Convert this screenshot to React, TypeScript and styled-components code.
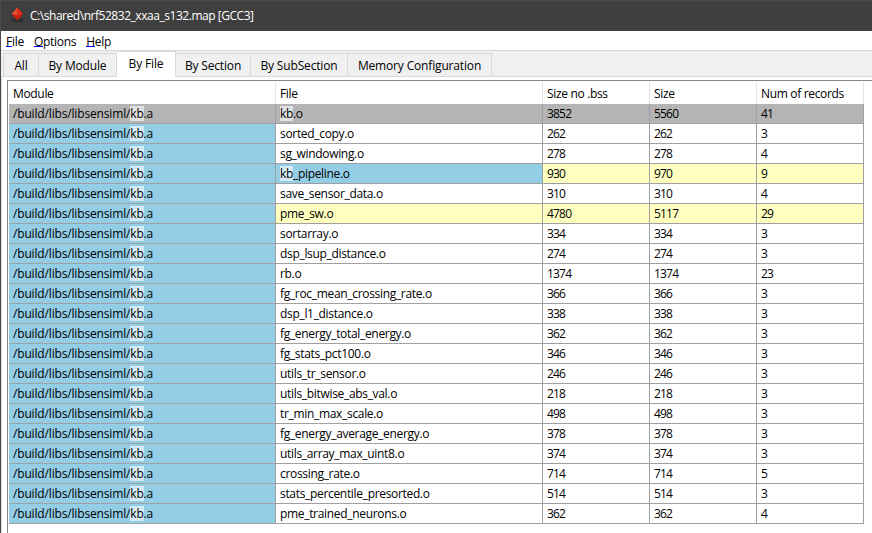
import React from "react";
import styled, { createGlobalStyle } from "styled-components";

const Global = createGlobalStyle`
  * { box-sizing: border-box; }
  body { margin: 0; overflow: hidden; background: #fff; }
`;

const Window = styled.div`
  width: 872px;
  height: 533px;
  display: flex;
  flex-direction: column;
  overflow: hidden;
  background: #fff;
  border-left: 1px solid #4a4a4a;
  color: #000;
  font: 12px/20px "Open Sans", "Noto Sans", sans-serif;
  letter-spacing: -0.16px;
  white-space: pre;
`;

const TitleBar = styled.header`
  height: 31px;
  flex: none;
  display: flex;
  align-items: center;
  padding-left: 8px;
  gap: 5px;
  background: #3f3f3f;
  border-top: 1px solid #4a4a4a;
  color: #fff;
  letter-spacing: -0.46px;
`;

const MenuBar = styled.nav`
  height: 19px;
  flex: none;
  display: flex;
  gap: 10px;
  padding-left: 5px;
  line-height: 21px;
  letter-spacing: -0.28px;
`;

const Accel = styled.span`
  display: inline-block;
  height: 16px;
  border-bottom: 1px solid #0000ff;
`;

const TabStrip = styled.div`
  height: 27px;
  flex: none;
  display: flex;
  align-items: flex-end;
  padding-left: 2px;
  background: #f0f0f0;
  border-top: 1px solid #d9d9d9;
  border-bottom: 1px solid #d9d9d9;
`;

const Tab = styled.div<{ $w: number; $active?: boolean }>`
  width: ${(p) => p.$w}px;
  height: ${(p) => (p.$active ? 26 : 23)}px;
  margin-bottom: ${(p) => (p.$active ? -1 : 0)}px;
  line-height: ${(p) => (p.$active ? 24 : 23)}px;
  text-align: center;
  background: ${(p) => (p.$active ? "#fff" : "#f0f0f0")};
  border-top: 1px solid #d9d9d9;
  border-right: 1px solid #d9d9d9;
  &:first-child { border-left: 1px solid #d9d9d9; }
`;

const Pane = styled.main`
  flex: 1;
  padding: 3px 0 0 5px;
  border-left: 1px solid #d9d9d9;
`;

const List = styled.div`
  height: 100%;
  padding: 1px 0 0 1px;
  border-left: 1px solid #828790;
  border-top: 1px solid #828790;
`;

const Grid = styled.div`
  display: grid;
  grid-template-columns: 267px 267px 107px 107px 107px;
  width: 855px;
`;

const HeadCell = styled.div`
  height: 22px;
  padding-left: 4px;
  line-height: 23px;
  letter-spacing: -0.33px;
  border-right: 1px solid #e5e5e5;
`;

const Cell = styled.div<{ $bg: string }>`
  height: 20px;
  padding-left: 4px;
  line-height: 20px;
  background: ${(p) => p.$bg};
  border-right: 1px solid #a0a0a0;
  border-bottom: 1px solid #a0a0a0;
`;

const FileCell = styled(Cell)`
  letter-spacing: -0.32px;
`;

const NumberCell = styled(Cell)`
  letter-spacing: -0.8px;
`;

const Match = styled.span`
  display: inline-block;
  height: 15px;
  line-height: 15px;
  background: rgba(255, 255, 255, 0.6);
`;

const tabs: [string, number, boolean?][] = [
  ["All", 36], ["By Module", 78], ["By File", 59, true],
  ["By Section", 75], ["By SubSection", 97], ["Memory Configuration", 144],
];

const rows: [string, number, number, number][] = [
  ["kb.o", 3852, 5560, 41],
  ["sorted_copy.o", 262, 262, 3],
  ["sg_windowing.o", 278, 278, 4],
  ["kb_pipeline.o", 930, 970, 9],
  ["save_sensor_data.o", 310, 310, 4],
  ["pme_sw.o", 4780, 5117, 29],
  ["sortarray.o", 334, 334, 3],
  ["dsp_lsup_distance.o", 274, 274, 3],
  ["rb.o", 1374, 1374, 23],
  ["fg_roc_mean_crossing_rate.o", 366, 366, 3],
  ["dsp_l1_distance.o", 338, 338, 3],
  ["fg_energy_total_energy.o", 362, 362, 3],
  ["fg_stats_pct100.o", 346, 346, 3],
  ["utils_tr_sensor.o", 246, 246, 3],
  ["utils_bitwise_abs_val.o", 218, 218, 3],
  ["tr_min_max_scale.o", 498, 498, 3],
  ["fg_energy_average_energy.o", 378, 378, 3],
  ["utils_array_max_uint8.o", 374, 374, 3],
  ["crossing_rate.o", 714, 714, 5],
  ["stats_percentile_presorted.o", 514, 514, 3],
  ["pme_trained_neurons.o", 362, 362, 4],
];

const highlighted = new Set(["kb_pipeline.o", "pme_sw.o"]);

const BLUE = "#93cde6";
const YELLOW = "#ffffc0";
const GRAY = "#b4b4b4";

const Diamond = () => (
  <svg width="16" height="18" viewBox="0 0 16 18">
    <ellipse cx="8" cy="13" rx="6.5" ry="2.4" fill="#303030" />
    <path d="M8.4 .5 14 7 8.4 13.5 2.8 7Z" fill="#cf1f0b" />
    <path d="M8.4 .5 8.4 8 2.8 7Z" fill="#e8543c" />
    <path d="M8.4 .5 14 7 8.4 8Z" fill="#dc3019" />
  </svg>
);

export default function App() {
  return (
    <Window>
      <Global />
      <TitleBar><Diamond /><span>{"C:\\shared\\nrf52832_xxaa_s132.map [GCC3]"}</span></TitleBar>
      <MenuBar>
        <span><Accel>F</Accel>ile</span>
        <span><Accel>O</Accel>ptions</span>
        <span><Accel>H</Accel>elp</span>
      </MenuBar>
      <TabStrip>
        {tabs.map(([t, w, a]) => <Tab key={t} $w={w} $active={a}>{t}</Tab>)}
      </TabStrip>
      <Pane>
        <List>
          <Grid>
            {["Module", "File", "Size no .bss", "Size", "Num of records"].map((h) => <HeadCell key={h}>{h}</HeadCell>)}
            {rows.map(([file, a, b, n], i) => {
              const bg = i === 0 ? GRAY : highlighted.has(file) ? YELLOW : "#fff";
              const hit = file.startsWith("kb");
              return (
                <React.Fragment key={file}>
                  <Cell $bg={i === 0 ? GRAY : BLUE}>/build/libs/libsensiml/<Match>kb</Match>.a</Cell>
                  <FileCell $bg={hit && i > 0 ? BLUE : bg}>{hit ? <><Match>kb</Match>{file.slice(2)}</> : file}</FileCell>
                  <NumberCell $bg={bg}>{a}</NumberCell>
                  <NumberCell $bg={bg}>{b}</NumberCell>
                  <NumberCell $bg={bg}>{n}</NumberCell>
                </React.Fragment>
              );
            })}
          </Grid>
        </List>
      </Pane>
    </Window>
  );
}
